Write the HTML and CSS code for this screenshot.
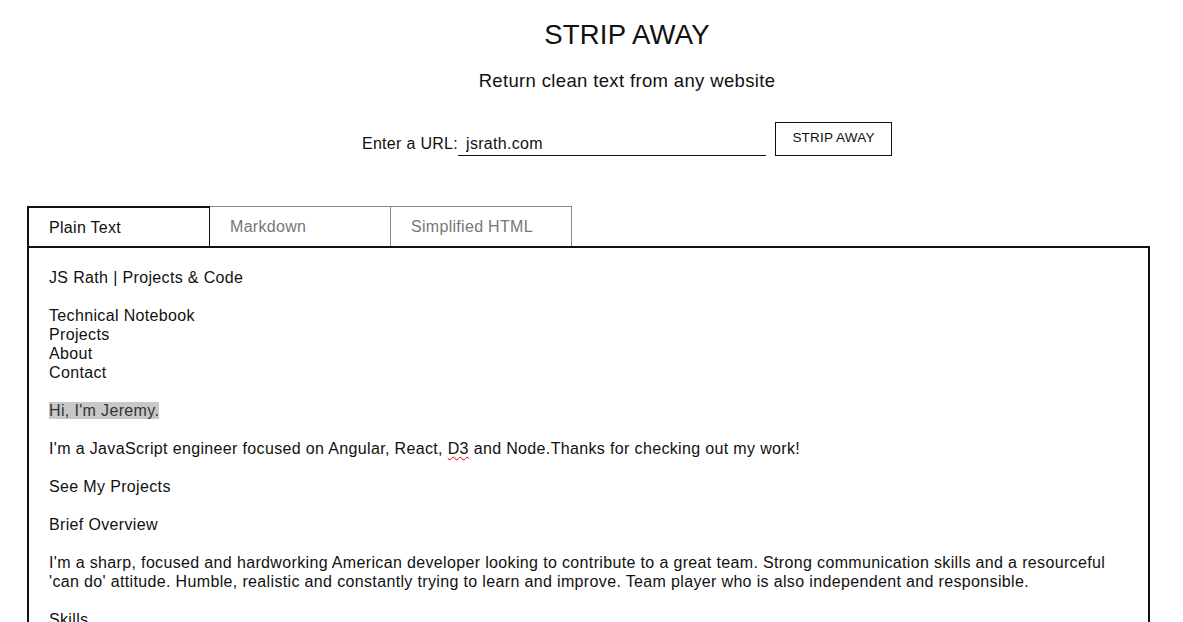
FILE: index.html
```html
<!DOCTYPE html>
<html>
<head>
<meta charset="utf-8">
<link rel="stylesheet" href="styles.css">
</head>
<body>
<header class="head">
  <h1 class="title">STRIP AWAY</h1>
  <p class="subtitle">Return clean text from any website</p>
  <form class="url-form">
    <label class="url-label">Enter a URL:</label>
    <input class="url-input" type="text" value="jsrath.com">
    <button class="strip-btn" type="button">STRIP AWAY</button>
  </form>
</header>
<main class="panel">
  <div class="tabs">
    <div class="tab active">Plain Text</div>
    <div class="tab">Markdown</div>
    <div class="tab">Simplified HTML</div>
  </div>
  <div class="output">
<p class="line">JS Rath | Projects &amp; Code</p>
<p class="line">&nbsp;</p>
<p class="line">Technical Notebook</p>
<p class="line">Projects</p>
<p class="line">About</p>
<p class="line">Contact</p>
<p class="line">&nbsp;</p>
<p class="line"><span class="hl">Hi, I'm Jeremy.</span></p>
<p class="line">&nbsp;</p>
<p class="line">I'm a JavaScript engineer focused on Angular, React, <span class="spell">D3</span> and Node.Thanks for checking out my work!</p>
<p class="line">&nbsp;</p>
<p class="line">See My Projects</p>
<p class="line">&nbsp;</p>
<p class="line">Brief Overview</p>
<p class="line">&nbsp;</p>
<p class="line">I'm a sharp, focused and hardworking American developer looking to contribute to a great team. Strong communication skills and a resourceful 'can do' attitude. Humble, realistic and constantly trying to learn and improve. Team player who is also independent and responsible.</p>
<p class="line">&nbsp;</p>
<p class="line">Skills</p>
  </div>
</main>
</body>
</html>
```

FILE: styles.css
```css
html, body {
  margin: 0;
  padding: 0;
  background: #fff;
}
body {
  font-family: "Liberation Sans", Arial, sans-serif;
  color: #111;
  overflow: hidden;
  height: 622px;
}
.head {
  display: flex;
  flex-direction: column;
  align-items: center;
  padding-left: 71px;
  padding-top: 19px;
}
.title {
  margin: 0;
  font-size: 27.5px;
  font-weight: normal;
  line-height: 32px;
  letter-spacing: 0.2px;
}
.subtitle {
  margin: 19px 0 0;
  font-size: 18.5px;
  line-height: 22px;
  letter-spacing: 0.35px;
}
.url-form {
  display: flex;
  align-items: flex-end;
  margin-top: 30px;
}
.url-label {
  font-size: 16px;
  line-height: 20px;
  letter-spacing: 0.3px;
  margin-right: 0;
  padding-bottom: 2px;
}
.url-input {
  width: 308px;
  height: 22px;
  box-sizing: border-box;
  border: none;
  border-bottom: 1px solid #111;
  font-family: inherit;
  font-size: 16px;
  letter-spacing: 0.3px;
  padding: 0 0 1px 8px;
  outline: none;
  color: #111;
}
.strip-btn {
  margin-left: 9px;
  width: 117px;
  height: 34px;
  background: #fff;
  border: 1px solid #111;
  font-family: inherit;
  font-size: 13.5px;
  letter-spacing: 0.2px;
  color: #111;
  padding: 0 0 4px;
}
.panel {
  margin: 50px 33px 0 27px;
}
.tabs {
  display: flex;
  height: 40px;
}
.tab {
  width: 181px;
  box-sizing: border-box;
  border-top: 1px solid #888;
  border-right: 1px solid #888;
  color: #777;
  font-size: 16px;
  letter-spacing: 0.3px;
  padding: 11px 0 0 20px;
}
.tab.active {
  width: 183px;
  border-top: 2px solid #111;
  border-left: 2px solid #111;
  border-right: 1px solid #111;
  color: #111;
  padding-left: 20px;
  padding-top: 11px;
}
.output {
  border: 2px solid #111;
  border-bottom: none;
  padding: 20px 20px 0 20px;
  min-height: 600px;
}
.line {
  margin: 0;
  font-size: 16px;
  line-height: 19px;
  letter-spacing: 0.35px;
}
.hl {
  background: #c8c8c8;
  color: #333;
}
.spell {
  text-decoration: underline wavy #d00;
  text-decoration-thickness: 1px;
  text-underline-offset: 2px;
}
```
